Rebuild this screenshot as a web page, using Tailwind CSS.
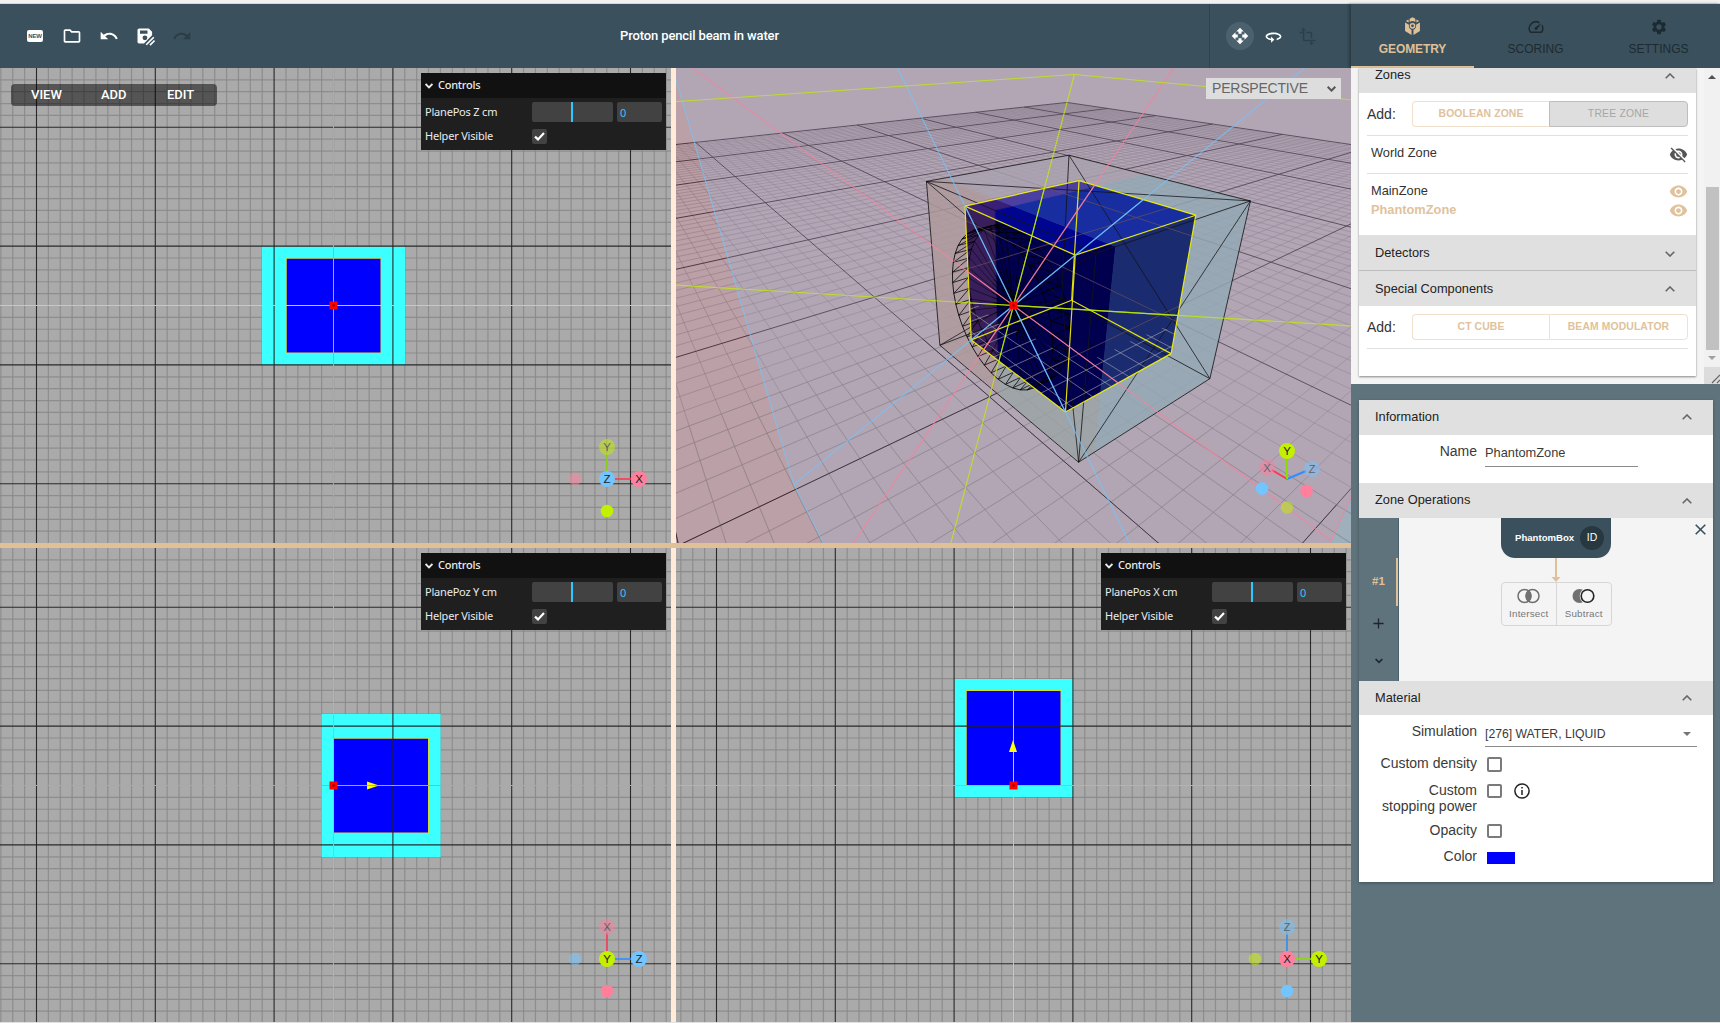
<!DOCTYPE html>
<html lang="en">
<head>
<meta charset="utf-8">
<title>Proton pencil beam in water</title>
<script src="https://cdn.jsdelivr.net/npm/@tailwindcss/browser@4"></script>
</head>
<body class="w-[1720px] h-[1023px] overflow-hidden bg-[#e0e0e0] font-['Liberation_Sans',Arial,sans-serif] text-[12.8px] text-[#222]">
<div class="h-[3px] bg-[#f1f1f1]"></div>
<div class="h-px bg-[#d6d6d6]"></div>
<div class="flex h-[1018px]">

  <!-- Editor -->
  <main class="w-[1351px] flex flex-col">
    <header class="h-16 bg-[#3a515d] flex items-center text-white">
      <div class="flex items-center w-[500px] pl-[25px] gap-[17px]">
        <div class="w-5 flex justify-center"><div class="w-4 h-3 rounded-[2px] bg-white text-[#3a515d] text-[6px] leading-3 font-bold text-center tracking-[-0.2px]">NEW</div></div>
        <svg class="size-5" viewBox="0 0 24 24" fill="currentColor"><path d="M9.17 6l2 2H20v10H4V6h5.17M10 4H4c-1.1 0-1.99.9-1.99 2L2 18c0 1.1.9 2 2 2h16c1.1 0 2-.9 2-2V8c0-1.1-.9-2-2-2h-8l-2-2z"/></svg>
        <svg class="size-5" viewBox="0 0 24 24" fill="currentColor"><path d="M12.5 8c-2.65 0-5.05.99-6.9 2.6L2 7v9h9l-3.62-3.62c1.39-1.16 3.16-1.88 5.12-1.88 3.54 0 6.55 2.31 7.6 5.5l2.37-.78C21.08 11.03 17.15 8 12.5 8z"/></svg>
        <svg class="size-5 -ml-px" viewBox="0 0 24 24" fill="currentColor"><path fill-rule="evenodd" d="M20.500 11.200V7l-4-4H5c-1.110 0-2 .9-2 2v14c0 1.100.890 2 2 2h5.800zM14.800 14.200A2.900 2.900 0 1 1 9 14.200a2.900 2.900 0 0 1 5.800 0zM6 5.500h9v3.800H6z"/><path d="M13.500 22.500l9-9M18 23l5.500-5.500" stroke="currentColor" stroke-width="2" fill="none"/></svg>
        <svg class="size-5 text-[#2b3d46]" viewBox="0 0 24 24" fill="currentColor"><path d="M18.400 10.600C16.550 8.990 14.150 8 11.500 8c-4.650 0-8.580 3.030-9.960 7.220L3.900 16c1.050-3.190 4.050-5.500 7.600-5.500 1.950 0 3.730.72 5.120 1.880L13 16h9V7l-3.600 3.600z"/></svg>
      </div>
      <div class="w-[709px] pl-[120px] font-[Roboto,sans-serif] font-medium text-[13px] whitespace-nowrap tracking-[-0.13px]">Proton pencil beam in water</div>
      <div class="h-full flex-1 border-l border-[#2f444f] flex items-center pl-4 gap-[10px]">
        <div class="size-7 rounded-full bg-[#4b626e] grid place-items-center"><svg class="size-[18px]" viewBox="0 0 24 24" fill="currentColor"><path d="M10 9h4V6h3l-5-5-5 5h3v3zm-1 1H6V7l-5 5 5 5v-3h3v-4zm14 2l-5-5v3h-3v4h3v3l5-5zm-9 3h-4v3H7l5 5 5-5h-3v-3z"/></svg></div>
        <svg class="size-[19px]" viewBox="0 0 24 24" fill="currentColor"><path d="M12 7C6.480 7 2 9.240 2 12c0 2.240 2.940 4.130 7 4.770V20l4-4-4-4v2.730c-3.150-.56-5-1.900-5-2.730 0-1.060 3.040-3 8-3s8 1.940 8 3c0 .73-1.460 1.890-4 2.530v2.050c3.530-.77 6-2.530 6-4.580 0-2.760-4.480-5-10-5z"/></svg>
        <svg class="size-[19px] ml-[5px] text-[#2c404b]" viewBox="0 0 24 24" fill="currentColor"><path d="M22 18v-2H8V4h2L7 1 4 4h2v2H2v2h4v8c0 1.100.9 2 2 2h8v2h-2l3 3 3-3h-2v-2h4zM10 8h6v6h2V8c0-1.100-.9-2-2-2h-6v2z"/></svg>
      </div>
    </header>
    <div class="grid grid-cols-[671px_675px] grid-rows-[475px_474px] gap-[5px] bg-[#ffebd8]">
      <section class="relative bg-[#aaa]">
        <svg id="viewXY" class="block size-full" viewBox="0 68 671 475"></svg>
        <nav class="absolute left-[11px] top-4 w-[206px] h-[22px] rounded bg-black/50 flex items-center text-white font-[Roboto,sans-serif] font-medium text-[13px]">
          <span class="ml-5 w-[70px]">VIEW</span><span class="w-[66px]">ADD</span><span>EDIT</span>
        </nav>
        <div class="absolute left-[421px] top-[5px]" data-controls="PlanePos Z cm"></div>
      </section>
      <section class="relative overflow-hidden bg-[#aaa]">
        <svg id="view3D" class="block size-full" viewBox="676 68 675 475"></svg>
        <div class="absolute left-[530px] top-[10px] w-[135px] h-[21px] bg-[#ddd] text-[#666] text-[14px] flex items-center justify-between pl-[6px] pr-[5px]"><span class="tracking-[-0.2px]">PERSPECTIVE</span><svg class="w-[9px] h-[6px]" viewBox="0 0 9 6" fill="none" stroke="#555" stroke-width="2"><path d="M.7.8l3.800 3.800L8.300.8"/></svg></div>
      </section>
      <section class="relative bg-[#aaa]">
        <svg id="viewXZ" class="block size-full" viewBox="0 548 671 474"></svg>
        <div class="absolute left-[421px] top-[5px]" data-controls="PlanePoz Y cm"></div>
      </section>
      <section class="relative bg-[#aaa]">
        <svg id="viewYZ" class="block size-full" viewBox="676 548 675 474"></svg>
        <div class="absolute left-[425px] top-[5px]" data-controls="PlanePos X cm"></div>
      </section>
      <div class="absolute left-0 top-[543px] w-[1351px] h-[5px] bg-[#dfc098]"></div>
    </div>
  </main>

  <!-- Sidebar -->
  <aside class="w-[369px] bg-[#5f737c] flex flex-col">
    <div class="h-16 shrink-0 bg-[#3a515d] grid grid-cols-3 text-center text-[12px] text-[#1d2a31] shadow-[-2px_0_3px_rgba(0,0,0,0.3)]">
      <div class="flex flex-col items-center pt-[13px] border-b-2 border-[#dfc098] text-[#dfc098]">
        <svg class="w-[17px] h-[19px]" viewBox="0 0 24 26"><path fill="currentColor" d="M12 0l4 2.200v4.300a8 8 0 0 0-8 0V2.200zM6.500 3l0 4.500L2.500 5.300zM17.500 3v4.500l4-2.200zM1.500 7.500L7 10.600c-.6 3 .6 5.800 3.600 7V25L1.500 19.500zM22.500 7.500L17 10.600c.6 3-.6 5.800-3.600 7V25l9.100-5.500z"/><circle cx="12" cy="12" r="3" fill="none" stroke="currentColor" stroke-width="2"/></svg>
        <span class="mt-[5px] leading-4 font-bold tracking-[-0.1px]">GEOMETRY</span>
      </div>
      <div class="flex flex-col items-center pt-[14px]">
        <svg class="size-[18px]" viewBox="0 0 24 24" fill="currentColor"><path d="M20.380 8.570l-1.230 1.850a8 8 0 0 1-.22 7.580H5.070A8 8 0 0 1 15.580 6.850l1.850-1.230A10 10 0 0 0 3.350 19a2 2 0 0 0 1.720 1h13.850a2 2 0 0 0 1.740-1 10 10 0 0 0-.27-10.440zm-9.790 6.840a2 2 0 0 0 2.830 0l5.660-8.490-8.490 5.660a2 2 0 0 0 0 2.830z"/></svg>
        <span class="mt-[5px] leading-4">SCORING</span>
      </div>
      <div class="flex flex-col items-center pt-[14px]">
        <svg class="size-[18px]" viewBox="0 0 24 24" fill="currentColor"><path d="M19.140 12.940c.04-.3.06-.61.06-.94 0-.32-.02-.64-.07-.94l2.030-1.580c.18-.14.23-.41.12-.61l-1.920-3.320c-.12-.22-.37-.29-.59-.22l-2.390.96c-.5-.38-1.030-.7-1.620-.94l-.36-2.540c-.04-.24-.24-.41-.48-.41h-3.840c-.24 0-.43.17-.47.41l-.36 2.540c-.59.24-1.130.57-1.620.94l-2.390-.96c-.22-.08-.47 0-.59.22L2.740 8.870c-.12.21-.08.47.12.61l2.030 1.580c-.05.3-.09.63-.09.94s.02.64.07.94l-2.030 1.580c-.18.14-.23.41-.12.61l1.920 3.320c.12.22.37.29.59.22l2.390-.96c.5.38 1.030.7 1.620.94l.36 2.540c.05.24.24.41.48.41h3.840c.24 0 .44-.17.47-.41l.36-2.540c.59-.24 1.130-.56 1.620-.94l2.390.96c.22.08.47 0 .59-.22l1.920-3.320c.12-.22.07-.47-.12-.61l-2.010-1.580zM12 15.600c-1.980 0-3.600-1.620-3.600-3.600s1.620-3.600 3.600-3.600 3.600 1.620 3.600 3.600-1.620 3.600-3.600 3.600z"/></svg>
        <span class="mt-[5px] leading-4">SETTINGS</span>
      </div>
    </div>

    <div class="h-[316px] shrink-0 bg-[#f4f4f4] flex">
      <div class="ml-2 w-[337px] h-[308px] bg-white shadow-[0_1px_2px_rgba(0,0,0,0.45)]">
        <div class="h-[25px] bg-[#e0e0e0] flex justify-between pl-4 pr-[21px]"><span class="leading-[13px]">Zones</span><svg class="w-[10px] h-[6px] mt-[5px]" viewBox="0 0 10 6" fill="none" stroke="#666" stroke-width="1.600"><path d="M.7 5.300L5 1l4.300 4.300"/></svg></div>
        <div class="mx-2 h-[43px] flex items-center border-b border-[#e0e0e0]">
          <span class="w-[45px] text-[14px] text-[#333] pt-px">Add:</span>
          <div class="w-[137px] h-[26px] border border-[#f0e0cc] border-r-0 rounded-l grid place-items-center text-[10.400px] font-bold text-[#e0c29c] tracking-[0.1px]">BOOLEAN ZONE</div>
          <div class="w-[139px] h-[26px] border border-[#bdbdbd] rounded-r bg-[#dedede] grid place-items-center text-[10.400px] text-[#a6a6a6] tracking-[0.2px]">TREE ZONE</div>
        </div>
        <div class="mx-2 h-[38px] pl-1 flex items-center justify-between border-b border-[#e0e0e0] text-[#333]"><span class="pb-[3px]">World Zone</span><svg class="size-[19px]" viewBox="0 0 24 24" fill="#555"><path d="M12 7c2.760 0 5 2.240 5 5 0 .65-.13 1.260-.36 1.830l2.920 2.920c1.510-1.260 2.700-2.890 3.430-4.750-1.730-4.390-6-7.500-11-7.500-1.400 0-2.740.25-3.980.7l2.160 2.160C10.740 7.130 11.350 7 12 7zM2 4.270l2.280 2.280.46.46C3.080 8.300 1.780 10.020 1 12c1.730 4.390 6 7.500 11 7.500 1.550 0 3.030-.3 4.380-.84l.42.42L19.730 22 21 20.730 3.270 3 2 4.270zM7.530 9.800l1.550 1.550c-.05.21-.08.43-.08.65 0 1.660 1.340 3 3 3 .22 0 .44-.03.65-.08l1.550 1.550c-.67.33-1.410.53-2.200.53-2.760 0-5-2.240-5-5 0-.79.2-1.530.53-2.200zm4.310-.78l3.150 3.150.02-.16c0-1.660-1.340-3-3-3l-.17.01z"/></svg></div>
        <div class="mx-2 h-[61px] pl-1 pt-[7px] text-[#333]">
          <div class="h-[19px] flex items-center justify-between"><span>MainZone</span><svg class="size-[19px] mt-px" viewBox="0 0 24 24" fill="#e0c29c"><path d="M12 4.500C7 4.500 2.730 7.610 1 12c1.730 4.390 6 7.500 11 7.500s9.270-3.110 11-7.500c-1.730-4.390-6-7.500-11-7.500zM12 17c-2.760 0-5-2.240-5-5s2.240-5 5-5 5 2.240 5 5-2.240 5-5 5zm0-8c-1.660 0-3 1.340-3 3s1.340 3 3 3 3-1.340 3-3-1.340-3-3-3z"/></svg></div>
          <div class="h-[19px] flex items-center justify-between text-[#e0c29c]"><span class="font-bold">PhantomZone</span><svg class="size-[19px] mt-px" viewBox="0 0 24 24" fill="#e0c29c"><path d="M12 4.500C7 4.500 2.730 7.610 1 12c1.730 4.390 6 7.500 11 7.500s9.270-3.110 11-7.500c-1.730-4.390-6-7.500-11-7.500zM12 17c-2.760 0-5-2.240-5-5s2.240-5 5-5 5 2.240 5 5-2.240 5-5 5zm0-8c-1.660 0-3 1.340-3 3s1.340 3 3 3 3-1.340 3-3-1.340-3-3-3z"/></svg></div>
        </div>
        <div class="h-9 bg-[#e0e0e0] border-b border-[#bdbdbd] flex justify-between items-center pl-4 pr-[21px]"><span class="pt-px">Detectors</span><svg class="w-[10px] h-[6px] mt-[2px]" viewBox="0 0 10 6" fill="none" stroke="#666" stroke-width="1.600"><path d="M.7.7L5 5 9.300.7"/></svg></div>
        <div class="h-[35px] bg-[#e0e0e0] flex justify-between items-center pl-4 pr-[21px]"><span>Special Components</span><svg class="w-[10px] h-[6px] mt-px" viewBox="0 0 10 6" fill="none" stroke="#666" stroke-width="1.600"><path d="M.7 5.300L5 1l4.300 4.300"/></svg></div>
        <div class="mx-2 h-[43px] flex items-center border-b border-[#e0e0e0]">
          <span class="w-[45px] text-[14px] text-[#333] pt-px">Add:</span>
          <div class="w-[137px] h-[26px] border border-[#f0e0cc] border-r-0 rounded-l grid place-items-center text-[10.400px] font-bold text-[#e0c29c] tracking-[0.1px]">CT CUBE</div>
          <div class="w-[139px] h-[26px] border border-[#f0e0cc] rounded-r grid place-items-center text-[10.400px] font-bold text-[#e0c29c] tracking-[0.1px]">BEAM MODULATOR</div>
        </div>
      </div>
      <div class="ml-auto w-4 bg-[#f1f1f1] flex flex-col items-center">
        <svg class="w-2 h-1 mt-[7px]" viewBox="0 0 8 4"><path d="M0 4l4-4 4 4z" fill="#505050"/></svg>
        <div class="w-[13px] h-[163px] mt-[108px] bg-[#c1c1c1]"></div>
        <svg class="w-2 h-1 mt-[6px]" viewBox="0 0 8 4"><path d="M0 0l4 4 4-4z" fill="#a0a0a0"/></svg>
        <div class="mt-[7px] w-4 h-[17px] bg-[#dcdcdc]"><svg class="size-full" viewBox="0 0 16 17" stroke="#666" stroke-width="1.200"><path d="M8 16l8-8M13 16l3-3"/></svg></div>
      </div>
    </div>

    <div class="ml-2 mt-4 w-[354px] bg-white shadow-[0_1px_3px_rgba(0,0,0,0.3)]">
      <div class="h-[35px] bg-[#e0e0e0] flex justify-between items-center pl-4 pr-[21px]"><span class="pb-px">Information</span><svg class="w-[10px] h-[6px] -mt-px" viewBox="0 0 10 6" fill="none" stroke="#666" stroke-width="1.600"><path d="M.7 5.300L5 1l4.300 4.300"/></svg></div>
      <div class="h-12 flex text-[#3a3a3a]">
        <span class="w-[118px] text-right text-[14px] pt-[6px]">Name</span>
        <span class="ml-2 w-[153px] h-8 border-b border-[#8c8c8c] pt-[8px]">PhantomZone</span>
      </div>
      <div class="h-[35px] bg-[#e0e0e0] flex justify-between items-center pl-4 pr-[21px]"><span class="pb-px">Zone Operations</span><svg class="w-[10px] h-[6px]" viewBox="0 0 10 6" fill="none" stroke="#666" stroke-width="1.600"><path d="M.7 5.300L5 1l4.300 4.300"/></svg></div>
      <div class="h-[163px] bg-[#f4f4f4] flex">
        <div class="w-10 bg-[#5f737c] border-r border-[#4d626c] flex flex-col items-center pt-10">
          <div class="w-full h-12 border-r-2 border-[#dfc098] flex items-center pl-[13px] text-[11.500px] font-bold text-[#dfc098]">#1</div>
          <svg class="mt-[12px] size-[11px]" viewBox="0 0 12 12" stroke="#1c262b" stroke-width="1.500"><path d="M6 .5v11M.5 6h11"/></svg>
          <svg class="mt-[29px] w-2 h-[6px]" viewBox="0 0 8 6" fill="none" stroke="#1c262b" stroke-width="1.600"><path d="M.6 1l3.400 3.400L7.400 1"/></svg>
        </div>
        <div class="ml-[102px] w-[111px] flex flex-col items-center">
          <div class="w-[110px] h-10 mr-px rounded-b-[14px] bg-[#3a515d] text-white flex items-center pl-[14px] text-[9.600px] font-bold"><span class="w-[65px]">PhantomBox</span><span class="size-6 rounded-full bg-[#273840] grid place-items-center text-[10.400px] font-normal">ID</span></div>
          <svg class="w-[10px] h-6 mr-[2px]" viewBox="0 0 10 24" fill="#dfc098"><path d="M4 0h2v19h3.500L5 24 .5 19H4z"/></svg>
          <div class="w-[111px] h-11 rounded border border-[#d6d6d6] grid grid-cols-2 text-[9.800px] text-[#777] text-center">
            <div class="border-r border-[#d6d6d6] flex flex-col items-center pt-[5px]"><svg class="w-[23px] h-4" viewBox="0 0 23 16" fill="none" stroke="#707070" stroke-width="1.500"><path fill="#707070" stroke="none" d="M11.500 2.200a7.200 7.200 0 0 1 0 11.600 7.200 7.200 0 0 1 0-11.600z"/><circle cx="7.500" cy="8" r="6.500"/><circle cx="15.500" cy="8" r="6.500"/></svg><span class="leading-4 mt-[2px] tracking-[0.2px]">Intersect</span></div>
            <div class="flex flex-col items-center pt-[5px]"><svg class="w-[23px] h-4" viewBox="0 0 23 16"><circle cx="7.500" cy="8" r="7" fill="#707070"/><circle cx="15.500" cy="8" r="7.800" fill="#f4f4f4"/><circle cx="15.500" cy="8" r="6.300" fill="none" stroke="#222" stroke-width="1.600"/></svg><span class="leading-4 mt-[2px] tracking-[0.2px]">Subtract</span></div>
          </div>
        </div>
        <svg class="ml-[83px] mt-[6px] size-[11px]" viewBox="0 0 11 11" stroke="#3a515d" stroke-width="1.600"><path d="M.7.7l9.600 9.600M10.300.7L.7 10.300"/></svg>
      </div>
      <div class="h-[34px] bg-[#e0e0e0] flex justify-between items-center pl-4 pr-[21px]"><span class="pb-px">Material</span><svg class="w-[10px] h-[6px]" viewBox="0 0 10 6" fill="none" stroke="#666" stroke-width="1.600"><path d="M.7 5.300L5 1l4.300 4.300"/></svg></div>
      <div class="h-[167px] text-[#3a3a3a] text-[14px] leading-4">
        <div class="h-[39px] flex"><span class="w-[118px] text-right pt-[8px]">Simulation</span><span class="ml-2 w-[212px] h-8 border-b border-[#8c8c8c] pt-[11px] pr-[6px] text-[12.200px] flex justify-between"><span>[276] WATER, LIQUID</span><svg class="w-2 h-1 mt-[6px]" viewBox="0 0 8 4"><path d="M0 0l4 4 4-4z" fill="#757575"/></svg></span></div>
        <div class="h-[27px] flex"><span class="w-[118px] text-right pt-px">Custom density</span><span class="ml-[10px] mt-[3px] size-[15px] rounded-[2px] border-2 border-[#7a7a7a]"></span></div>
        <div class="h-[40px] flex"><span class="w-[118px] text-right pt-px">Custom<br>stopping power</span><span class="ml-[10px] mt-[3px] w-[15px] h-[14px] rounded-[2px] border-2 border-[#7a7a7a]"></span><svg class="ml-[11.500px] mt-[2px] size-4" viewBox="0 0 16 16" fill="none" stroke="#222" stroke-width="1.500"><circle cx="8" cy="8" r="7.100"/><path d="M8 7v5M8 4v1.600"/></svg></div>
        <div class="h-[26px] flex"><span class="w-[118px] text-right pt-px">Opacity</span><span class="ml-[10px] mt-[3px] w-[15px] h-[14px] rounded-[2px] border-2 border-[#7a7a7a]"></span></div>
        <div class="flex"><span class="w-[118px] text-right pt-px">Color</span><span class="ml-[10px] mt-[5px] w-7 h-3 bg-[#0000ff]"></span></div>
      </div>
    </div>
  </aside>
</div>

<template id="controls">
  <div class="w-[245px] h-[77px] bg-[#1f1f1f] text-[#ebebeb] font-['Noto_Sans','Open_Sans',sans-serif] text-[11px]">
    <div class="h-[25px] bg-[#111] flex items-center gap-[5px] pl-1 font-medium"><svg class="w-2 h-[6px]" viewBox="0 0 8 6" fill="none" stroke="#ebebeb" stroke-width="1.800"><path d="M.6 1l3.400 3.400L7.400 1"/></svg><span class="tracking-[-0.25px]">Controls</span></div>
    <div class="h-7 flex items-center pl-1 tracking-[-0.2px]"><span class="w-[107px]" data-name></span><span class="w-[81px] h-5 rounded-[2px] bg-[#424242] flex"><i class="block ml-[39px] w-[2px] h-5 bg-[#2cc9ff]"></i></span><span class="ml-1 w-[45px] h-5 rounded-[2px] bg-[#424242] pl-[3px] leading-[21px] text-[#2cc9ff]">0</span></div>
    <div class="h-5 flex items-center pl-1 tracking-[-0.2px]"><span class="w-[107px]">Helper Visible</span><span class="size-[15px] rounded-[2px] bg-[#424242] grid place-items-center"><svg class="w-[11px] h-[9px]" viewBox="0 0 11 9" fill="none" stroke="#fff" stroke-width="2.200"><path d="M1 4.600l3 2.800L10 1"/></svg></span></div>
  </div>
</template>

<script>
document.querySelectorAll('[data-controls]').forEach(el => {
  const c = document.getElementById('controls').content.cloneNode(true);
  c.querySelector('[data-name]').textContent = el.dataset.controls;
  el.appendChild(c);
});

const PINK = '#ff7f9d', LIME = '#c3ef00', SKY = '#73c5ff';
const COL = { X: PINK, Y: LIME, Z: SKY }, AX = { X: '#ff3653', Y: '#8adb00', Z: '#2c8fff' };
const line = (a, b, c, d, stroke, w = 1, o = 1) => `<line x1="${a.toFixed(2)}" y1="${b.toFixed(2)}" x2="${c.toFixed(2)}" y2="${d.toFixed(2)}" stroke="${stroke}" stroke-width="${w}" stroke-opacity="${o}"/>`;
const ball = (x, y, r, n, o, label) => `<g opacity="${o}"><circle cx="${x}" cy="${y}" r="${r}" fill="${COL[n]}"/>${label ? `<text x="${x}" y="${y + 4}" font-family="Liberation Sans" font-size="11.500" fill="#222" text-anchor="middle">${n}</text>` : ''}</g>`;

function gizmo(cx, cy, mid, right, up) {
  return line(cx, cy, cx, cy - 26, AX[up], 2, .75) + line(cx, cy, cx + 26, cy, AX[right], 2, .8)
    + ball(cx, cy - 32, 8, up, .5, 1) + ball(cx - 32, cy, 6.300, right, .5) + ball(cx, cy + 32, 6.300, up, 1)
    + ball(cx + 32, cy, 8, right, 1, 1) + ball(cx, cy, 8, mid, 1, 1);
}

// Orthographic views: 11.88 px per cm, a dark line every 10 cm
const U = 11.88;
function ortho(id, x0, x1, y0, y1, cx, cy, vColor, hColor, outer, inner, extra) {
  let s = '';
  for (const major of [0, 1]) {
    if (major) s += `<rect x="${outer[0]}" y="${outer[1]}" width="${outer[2]}" height="${outer[3]}" fill="#3cffff"/>`;
    if (major) s += `<rect x="${inner[0]}" y="${inner[1]}" width="${inner[2]}" height="${inner[3]}" fill="#0000ff" stroke="#d2dc30" stroke-width="1"/>`;
    for (let k = -60; k <= 60; k++) {
      if ((Math.abs(k) % 10 === 5) != major) continue;
      const c = major ? '#222' : '#888', x = cx + k * U, y = cy + k * U;
      if (x > x0 && x < x1) s += line(x, y0, x, y1, c, major ? 1.100 : 1.200, major ? .95 : .85);
      if (y > y0 && y < y1) s += line(x0, y, x1, y, c, major ? 1.100 : 1.200, major ? .95 : .85);
    }
  }
  s += line(cx, y0, cx, y1, vColor) + line(x0, cy, x1, cy, hColor) + extra
    + `<rect x="${cx - 4}" y="${cy - 4}" width="8" height="8" fill="#f00"/><rect x="${cx - 1}" y="${cy - 1}" width="2" height="2" fill="#500"/>`;
  document.getElementById(id).innerHTML = s;
}
ortho('viewXY', 0, 671, 68, 543, 333.5, 305.5, PINK, LIME, [262, 246.500, 143, 118.500], [286.200, 258.200, 94.800, 94.800], gizmo(607, 479, 'Z', 'X', 'Y'));
ortho('viewXZ', 0, 671, 548, 1022, 333.5, 785.5, SKY, PINK, [321.600, 714, 119, 143], [333.500, 738.200, 95, 94.800],
  '<path d="M367 781.500v8l12-4z" fill="#ff0"/>' + line(333.5, 785.5, 428, 785.5, PINK) + gizmo(607, 959, 'Y', 'Z', 'X'));
ortho('viewYZ', 676, 1351, 548, 1022, 1013.5, 785.5, LIME, SKY, [954.500, 679, 118.500, 118], [966.200, 690.500, 94.800, 95],
  '<path d="M1009 752h8l-4-12z" fill="#ff0"/>' + gizmo(1287, 959, 'X', 'Y', 'Z'));

// Perspective view
const E = 28.6 * Math.PI / 180, se = Math.sin(E), ce = Math.cos(E), sa = .79, ca = .613, D = 24.9, F = 509.3;
const cam = p => [-ca * p[0] + sa * p[2], se * sa * p[0] + ce * p[1] + se * ca * p[2], D + ce * sa * p[0] - se * p[1] + ce * ca * p[2]];
const scr = c => [1013.5 + F * c[0] / c[2], 305.5 - F * c[1] / c[2]];
function seg(a, b, stroke, w, o) {
  let A = cam(a), B = cam(b); const n = 1.5;
  if (A[2] < n && B[2] < n) return '';
  if (A[2] < n) [A, B] = [B, A];
  if (B[2] < n) { const t = (A[2] - n) / (A[2] - B[2]); B = A.map((v, i) => v + (B[i] - v) * t); }
  const p = scr(A), q = scr(B);
  if (Math.max(p[0], q[0]) < 676 || Math.min(p[0], q[0]) > 1351 || Math.max(p[1], q[1]) < 68 || Math.min(p[1], q[1]) > 543) return '';
  return line(p[0], p[1], q[0], q[1], stroke, w, o);
}
function quad(pts, attrs) {
  const c = pts.map(cam), out = [], n = 1.5;
  c.forEach((A, i) => {
    const B = c[(i + 1) % c.length];
    if (A[2] >= n) out.push(scr(A));
    if ((A[2] >= n) !== (B[2] >= n)) { const t = (A[2] - n) / (A[2] - B[2]); out.push(scr(A.map((v, j) => v + (B[j] - v) * t))); }
  });
  return `<polygon points="${out.map(p => p.map(v => v.toFixed(1)).join()).join(' ')}" ${attrs}/>`;
}
function grid(lo, hi, minor, major, mo, Mo) {
  let s = '';
  for (const m of [0, 1]) for (let k = lo; k <= hi; k++) {
    if ((Math.abs(k) % 10 === 5) != m) continue;
    s += seg([k, 0, lo], [k, 0, hi], m ? major : minor, 1, m ? Mo : mo) + seg([lo, 0, k], [hi, 0, k], m ? major : minor, 1, m ? Mo : mo);
  }
  return s;
}
const L = 100;
const planes = [
  [PINK, [[0, L, L], [0, L, -L], [0, -L, -L], [0, -L, L]]],
  [SKY, [[L, L, 0], [L, -L, 0], [-L, -L, 0], [-L, L, 0]]],
  [LIME, [[L, 0, L], [L, 0, -L], [-L, 0, -L], [-L, 0, L]]]];
let s = grid(-55, 55, '#747474', '#101010', .5, .85);
s += quad(planes[1][1], `fill="${SKY}" fill-opacity=".2"`) + quad(planes[0][1], `fill="${PINK}" fill-opacity=".2"`);
s += grid(-55, 0, '#808880', '#1a1a1a', .35, .4);

// Outer box split where the section planes cross it; colours: outer, inner side, inner top
const regions = [
  [[[6, 5, -1], [0, 5, -1], [0, -5, -1], [6, -5, -1]], '#ae9a9c', '#381f5c', '#3a1f78'],
  [[[0, 5, -1], [-6, 5, -1], [-6, -5, -1], [0, -5, -1]], '#9aa4a3', '#00004e', '#00058f'],
  [[[-6, 5, -1], [-6, 5, 0], [-6, -5, 0], [-6, -5, -1]], '#9aa4a3', '#00004e', '#00058f'],
  [[[-6, 5, 0], [-6, 5, 9], [-6, -5, 9], [-6, -5, 0]], '#93a8b5', '#1a2b70', '#182ea0'],
  [[[6, 5, -1], [6, 5, 0], [0, 5, 0], [0, 5, -1]], '#ae9a9c', '#381f5c', '#3a1f78'],
  [[[0, 5, -1], [0, 5, 0], [-6, 5, 0], [-6, 5, -1]], '#9aa4a3', '#00004e', '#00058f'],
  [[[6, 5, 0], [6, 5, 9], [0, 5, 9], [0, 5, 0]], '#a9a2b0', '#3a2c80', '#4b3fa2'],
  [[[0, 5, 0], [0, 5, 9], [-6, 5, 9], [-6, 5, 0]], '#93a8b5', '#1a2b70', '#182ea0']];
const cube = (x0, x1, y0, y1, z0, z1) => [[x0, y1, z0], [x1, y1, z0], [x1, y1, z1], [x0, y1, z1], [x0, y0, z0], [x1, y0, z0], [x1, y0, z1], [x0, y0, z1]];
const edges = [[0, 1], [1, 2], [2, 3], [3, 0], [4, 5], [5, 6], [6, 7], [7, 4], [0, 4], [1, 5], [2, 6], [3, 7]];
const big = cube(-6, 6, -5, 5, -1, 9), box = cube(-4, 4, -4, 4, 0, 8);
s += `<defs><clipPath id="top">${quad([box[0], box[1], box[2], box[3]], '')}</clipPath><clipPath id="side">${quad([box[0], box[1], box[5], box[4]], '')}${quad([box[0], box[3], box[7], box[4]], '')}</clipPath>
<clipPath id="boxall">${quad([box[1], box[2], box[3], box[7], box[4], box[5]], '')}</clipPath>
<clipPath id="low"><polygon points="968,297 1003,327 1033,337 1073,360 1100,357 1133,340 1163,328 1177,333 1172,353 1066,412 971,340"/></clipPath></defs>`;
s += regions.map(r => quad(r[0], `fill="${r[1]}" fill-opacity=".82"`)).join('');
s += `<g clip-path="url(#side)">${regions.map(r => quad(r[0], `fill="${r[2]}" stroke="${r[2]}" stroke-width=".5"`)).join('')}</g>`;
s += `<g clip-path="url(#top)">${regions.map(r => quad(r[0], `fill="${r[3]}" stroke="${r[3]}" stroke-width=".5"`)).join('')}</g>`;

// Beam-side cylinder wireframe
const N = 40, ring = (i, z, r = 4) => [r * Math.cos(i * 2 * Math.PI / N), r * Math.sin(i * 2 * Math.PI / N), z];
let cyl = '';
for (let i = 0; i < N; i++) {
  cyl += seg(ring(i, -1), ring(i + 1, -1), '#000', 1, .85) + seg(ring(i, 0), ring(i + 1, 0), '#000', 1, .7)
    + seg(ring(i, -1), ring(i, 0), '#000', 1, .75) + seg(ring(i, -1), ring(i + 1, 0), '#000', 1, .75)
    + seg(ring(i, 0), [0, 0, 0], '#000', 1, .5) + seg(ring(i, 0, 1.8), [0, 0, 0], '#000', 1, .5);
}
s += cyl;
s += edges.map(e => seg(big[e[0]], big[e[1]], '#111', 1, .8)).join('');
s += [[1, 3], [2, 7], [3, 4], [1, 6], [5, 0], [4, 6]].map(e => seg(big[e[0]], big[e[1]], '#111', 1, .75)).join('');
s += `<g clip-path="url(#low)">${grid(-15, 25, '#a8a8b0', '#a8a8b0', .6, .6)}</g>`;
let maj = ''; for (const k of [-5, 5, 15, 25, 35]) maj += seg([k, 0, -55], [k, 0, 55], '#6b5058', 1, .7) + seg([-55, 0, k], [55, 0, k], '#6b5058', 1, .7);
s += `<g clip-path="url(#boxall)">${maj}</g>`;
s += edges.map(e => seg(box[e[0]], box[e[1]], '#f5f500', 1.200, .9)).join('');

let ax = '';
for (const [c, q] of planes) {
  for (let i = 0; i < 4; i++) ax += seg(q[i], q[(i + 1) % 4], c, 1, .75);
  ax += seg(q[0], q[2], c, 1.100, .75) + seg(q[1], q[3], c, 1.100, .75);
}
s += ax + `<g clip-path="url(#boxall)">${ax}</g>`;
s += '<rect x="1009.500" y="301.500" width="8" height="8" fill="#f00"/><rect x="1012.500" y="304.500" width="2" height="2" fill="#500"/>';
s += line(1287, 479, 1272, 470, AX.X, 2) + line(1287, 479, 1306, 471, AX.Z, 2) + line(1287, 479, 1287, 456, AX.Y, 2)
  + ball(1267, 467.5, 8, 'X', .5, 1) + ball(1312, 469, 8, 'Z', .5, 1) + ball(1287, 451, 8, 'Y', 1, 1)
  + ball(1262, 488.5, 6.3, 'Z', 1) + ball(1306.5, 491, 6.3, 'X', 1) + ball(1287, 507.5, 6.3, 'Y', .5);
document.getElementById('view3D').innerHTML = s;
</script>
</body>
</html>
